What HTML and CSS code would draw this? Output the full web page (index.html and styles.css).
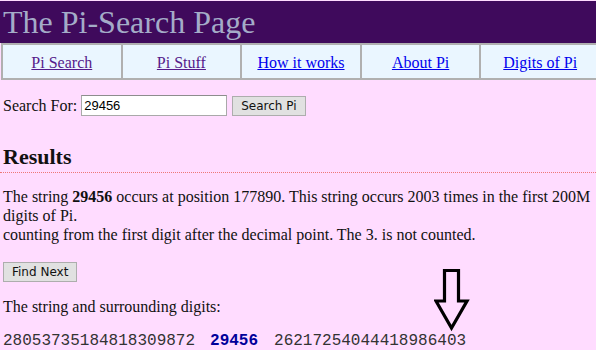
FILE: index.html
```html
<!DOCTYPE html>
<html lang="en">
<head>
    <meta charset="UTF-8">
    <title>The Pi-Search Page</title>
    <link rel="stylesheet" href="styles.css">
</head>
<body>
    <div class="banner">The Pi-Search Page</div>
    <table class="nav">
        <tr>
            <td><a href="#" class="seen">Pi Search</a></td>
            <td><a href="#" class="seen">Pi Stuff</a></td>
            <td><a href="#">How it works</a></td>
            <td><a href="#">About Pi</a></td>
            <td><a href="#">Digits of Pi</a></td>
        </tr>
    </table>

    <form class="search" onsubmit="return false">
        <label for="q">Search For:</label>
        <input type="text" id="q" value="29456">
        <button class="btn">Search Pi</button>
    </form>

    <h2 class="results">Results</h2>
    <p class="info">The string <b>29456</b> occurs at position 177890. This string occurs 2003 times in the first 200M digits of Pi.<br>counting from the first digit after the decimal point. The 3. is not counted.</p>

    <button class="btn">Find Next</button>

    <p class="around">The string and surrounding digits:</p>
    <div class="digits">28053735184818309872<b>29456</b>26217254044418986403</div>

    <!-- annotation arrow -->
    <svg class="arrow" width="40" height="66" viewBox="0 0 40 66">
        <path d="M10.5 3.5 H24.5 V34 H33 L17.5 61 L2 34 H10.5 Z" fill="none" stroke="#000" stroke-width="3.2" stroke-linejoin="miter"/>
    </svg>
</body>
</html>
```

FILE: styles.css
```css
body {
    margin: 0;
    padding-top: 1px;
    background: #ffdcff;
    font-family: "Liberation Serif", "Times New Roman", serif;
    font-size: 16px;
    color: #111;
    position: relative;
    min-height: 349px;
}
.banner {
    background: #3f0a5c;
    color: #a4acc8;
    font-size: 32px;
    line-height: 42px;
    height: 42px;
    padding-left: 3px;
}
.nav {
    border-collapse: collapse;
    width: 600px;
    margin-left: 1px;
    background: #eaf6ff;
    table-layout: fixed;
}
.nav td {
    border: 2px solid #b0b0b0;
    text-align: center;
    height: 31px;
    padding: 2px 0 0;
}
.nav a { color: #0000ee; }
.nav a.seen { color: #551a8b; }

.search {
    margin: 15px 0 0 3px;
    display: flex;
    align-items: center;
}
.search label { margin-right: 4px; }
.search input {
    width: 140px;
    height: 17px;
    padding: 1px 2px;
    border: 1px solid #a9a9a9;
    border-top-color: #8d8d8d;
    font-family: "Liberation Sans", Arial, sans-serif;
    font-size: 13px;
    margin: 0 5px 0 0;
}
.btn {
    font-family: "DejaVu Sans", Tahoma, sans-serif;
    font-size: 12px;
    background: #e1e1e1;
    border: 1px solid #adadad;
    padding: 1px 8px;
    height: 20px;
    color: #111;
}
.results {
    margin: 28px 0 0 0;
    padding: 0 3px 2px;
    font-size: 22px;
    line-height: 26px;
    border-bottom: 1px dotted #ee7777;
}
.info {
    margin: 14px 3px 0;
    line-height: 19px;
}
.info + .btn { margin: 18px 0 0 3px; }
.around { margin: 16px 3px 0; }
.digits {
    margin: 16px 0 0 3px;
    font-family: "Liberation Mono", "Courier New", monospace;
    font-size: 16px;
    line-height: 18px;
    color: #333;
}
.digits b {
    color: #00009a;
    margin: 0 16px 0 15px;
}
.arrow {
    position: absolute;
    left: 434px;
    top: 267px;
}
```
